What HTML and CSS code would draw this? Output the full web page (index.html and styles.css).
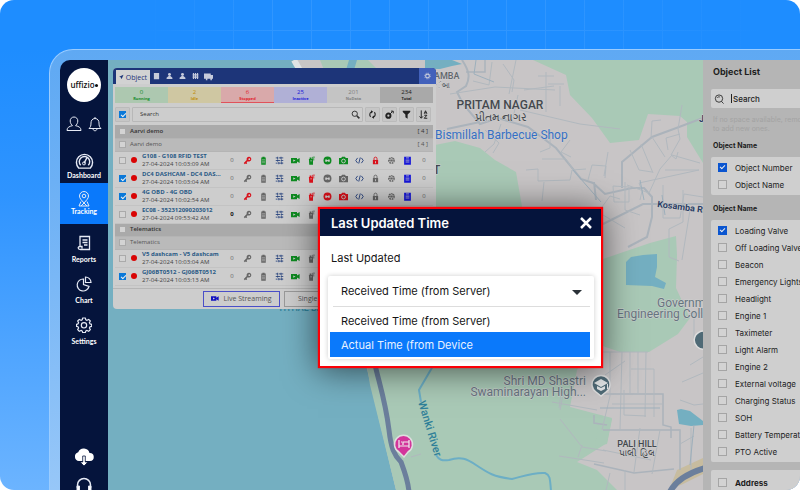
FILE: index.html
```html
<!DOCTYPE html>
<html lang="en">
<head>
<meta charset="utf-8">
<title>Tracking - Last Updated Time</title>
<link rel="stylesheet" href="styles.css">
</head>
<body>
<svg class="sprite" aria-hidden="true">
  <symbol id="key" viewBox="0 0 12 12"><path fill="currentColor" fill-rule="evenodd" d="M8 1a3.2 3.2 0 0 0-3 4.300L1 9.400 2.400 11l1-1 1 .8 1.200-1.300-.8-1 1.500-1.500A3.200 3.200 0 1 0 8 1zm.4 2a1.200 1.200 0 1 1 0 2.400 1.200 1.200 0 0 1 0-2.400z"/></symbol>
  <symbol id="battery" viewBox="0 0 12 12"><path fill="currentColor" d="M4.500 1h3v1H9v9.500H3V2h1.500z"/><path stroke="#cdcdcd" stroke-width=".7" d="M4 5h4M4 7h4M4 9h4"/></symbol>
  <symbol id="sliders" viewBox="0 0 12 12"><path stroke="#24407c" stroke-width="1.100" fill="none" d="M1 2.500h2.500M5 2.500h6M1 6h6M8.500 6H11M1 9.500h2.500M5 9.500h6M3.500 1v3M8 1v3M3.500 4.500v3M8.500 4.500v3M5 8v3M9 8v3"/></symbol>
  <symbol id="video" viewBox="0 0 12 12"><path fill="currentColor" d="M0 2.500h8v2.300l3.500-2v6.400L8 7.200v2.300H0z"/><path fill="#cdcdcd" d="m3 4.500 3 1.500-3 1.500z"/></symbol>
  <symbol id="fuel" viewBox="0 0 12 12"><path fill="currentColor" d="M2.500 4h1V2h2.500v2H8v7.500H3z"/><path fill="none" stroke="currentColor" d="M7.500 4V1.500h3M9 3v3"/><path fill="#cdcdcd" d="M4.500 6h2v1h-2z"/></symbol>
  <symbol id="disc" viewBox="0 0 12 12"><circle cx="6" cy="6" r="5.300" fill="currentColor"/><path fill="#cdcdcd" d="M3 4.500h2L6 5.500l1-1h2v3H7l-1-1-1 1H3z"/></symbol>
  <symbol id="camera" viewBox="0 0 12 12"><path fill="currentColor" d="M0 2.500h3l1-1.500h4l1 1.500h3V11H0z"/><circle cx="6" cy="6.700" r="2.500" fill="none" stroke="#cdcdcd" stroke-width="1.200"/></symbol>
  <symbol id="code" viewBox="0 0 12 12"><path stroke="#24407c" stroke-width="1.200" fill="none" d="M3.500 2.500 1 6l2.500 3.500M8.500 2.500 11 6 8.500 9.500M7 2 5 10"/></symbol>
  <symbol id="lock" viewBox="0 0 12 12"><path fill="none" stroke="currentColor" stroke-width="1.200" d="M4 6V3.500a2 2 0 0 1 4 0V6"/><path fill="currentColor" d="M2.500 5.300h7V11h-7z"/><path fill="#cdcdcd" d="M5.400 7h1.200v2.500H5.400z"/></symbol>
  <symbol id="wheel" viewBox="0 0 12 12"><circle cx="6" cy="6" r="3.700" fill="none" stroke="currentColor" stroke-width="1.600" stroke-dasharray="2.400 .8"/><path stroke="currentColor" d="M2 6h8M4 2.600l4 6.800M8 2.600 4 9.400"/></symbol>
  <symbol id="clip" viewBox="0 0 12 12"><path fill="currentColor" d="M1.500 1h9v10.500h-9z"/><path stroke="#cdcdcd" d="M4 2.500h4M3.500 5.500h5M3.500 8h5"/></symbol>
  <symbol id="person" viewBox="0 0 12 12"><circle cx="6" cy="3.500" r="2.500" fill="currentColor"/><path fill="currentColor" d="M4.500 6h3l3.500 3v2H1V9z"/></symbol>
  <symbol id="glass" viewBox="0 0 12 12"><circle cx="5" cy="5" r="3.500" fill="none" stroke="currentColor" stroke-width="1.300"/><path stroke="currentColor" stroke-width="2" d="m7.800 7.800 3.400 3.400"/></symbol>
  <symbol id="gear" viewBox="0 0 24 24"><path fill="none" stroke="currentColor" stroke-width="1.800" stroke-linejoin="round" d="M10 1.500h4l.7 2.700 1.800.8 2.500-1.400L21.500 6l-1.400 2.500.8 1.800 2.600.7v3l-2.600.7-.8 1.800 1.400 2.500-2.500 2.500-2.500-1.400-1.800.8-.7 2.600h-4l-.7-2.600-1.800-.8L5 21.500 2.500 19l1.400-2.500-.8-1.800L.8 14v-3l2.300-.7.8-1.800L2.500 6 5 3.600 7.500 5l1.800-.8z"/><circle cx="12" cy="12.500" r="4" fill="none" stroke="currentColor" stroke-width="1.800"/></symbol>
</svg>

<main class="stage">
<div class="device">
<div class="app">

<nav class="sidebar" aria-label="Main">
  <div class="logo">uffizio<i></i></div>
  <div class="quick">
    <button aria-label="Profile"><svg viewBox="0 0 16 16"><path d="M8 1a3.800 3.800 0 0 0-3.800 4C4.200 7 5.400 9 6.500 9.600 3 10.500 1 11.500 1 14.500h14c0-3-2-4-5.500-4.900C10.600 9 11.800 7 11.800 5A3.800 3.800 0 0 0 8 1z"/></svg></button>
    <button aria-label="Alerts"><svg viewBox="0 0 16 16"><path d="M8 1v1.500C5 2.500 4 5 4 7c0 3-.5 4-2 5.500h12C12.500 11 12 10 12 7c0-2-1-4.500-4-4.500M6 12.500c0 3 4 3 4 0"/></svg></button>
  </div>
  <a href="#dashboard"><svg class="big" viewBox="0 0 20 20"><path stroke-width="1.500" d="M4 17a8.500 8.500 0 1 1 12 0zM6 14a5.500 5.500 0 1 1 8 0M9.500 12l3-6"/><circle cx="9.500" cy="12" r="1.600"/></svg>Dashboard</a>
  <a href="#tracking" class="active"><svg viewBox="0 0 16 16"><path d="M8 12C5.500 9 3.500 7.500 3.500 5a4.500 4.500 0 0 1 9 0c0 2.500-2 4-4.500 7zM5 10.500 3 15h10l-2-4.500M5 15l3-3 3 3"/><circle cx="8" cy="5" r="1.800"/></svg>Tracking</a>
  <a href="#reports" class="gap"><svg viewBox="0 0 16 16"><path stroke-width="1.300" d="M4 11.500v-10h9.500V14.500h-9c-3 0-3-3-.5-3h2v2M6.500 5h5M6.500 7.500h5M8 10h3.500"/></svg>Reports</a>
  <a href="#chart"><svg viewBox="0 0 16 16"><path stroke-width="1.200" d="M7.500 3A6 6 0 1 0 13 10.500L7.500 8.500zM9.500 1v5.500H15A5.500 5.500 0 0 0 9.500 1z"/></svg>Chart</a>
  <a href="#settings"><svg viewBox="0 0 24 24"><use href="#gear"/></svg>Settings</a>
  <div class="tools">
    <button aria-label="Download"><svg viewBox="0 0 20 18"><path fill="#fff" stroke="none" d="M5 13a4.500 4.500 0 0 1-.8-8.800A6 6 0 0 1 15.500 5 4 4 0 0 1 16 13z"/><path fill="#fff" stroke="#05143c" stroke-width=".8" d="M8.700 8h2.600v6H14l-4 4-4-4h2.700z"/></svg></button>
    <button aria-label="Support"><svg viewBox="0 0 20 18"><path stroke-width="1.500" d="M3.500 12V9a6.500 6.500 0 0 1 13 0v3"/><path fill="#fff" d="M3 10h2.500v5H3zM14.500 10H17v5h-2.500z"/></svg></button>
  </div>
</nav>

<section class="map" aria-label="Map">
<svg class="terrain" viewBox="108 60 595 430" preserveAspectRatio="xMinYMin slice">
  <path fill="#c8c5c6" d="M108 60h595v430H108z"/>
  <path fill="#74afc1" d="M108 60h188l20 100 32 120 18 85 30 125H108z"/>
  <g fill="#a9c9b6">
    <path d="M320 60h48l20 20h-60zM533 60l33 15 4 20 22 23 18 25 29-3 9-26 32 2 7 6v15l16 26V60z"/>
    <path d="M420 150l15-5 20-4 25 7 15 12 21 12 7 40H420zM600 260l50-17 26-7 1 19-1 33 14 30-12 16-29 18h-29l-20-7zM366 360h217l-6 10-7 37 42 11-5 25-30 19 20 8 20 20H396l-26-105z"/>
    <path d="M600 415l12 4-5 25-12 2z"/>
  </g>
  <g fill="#74afc1">
    <path d="M425 60h27l10 4-10 2-12 3h-15zM349 60h8l-3 10h-8zM626 262l5-5 12-2 14-1v13l-2 10 11 6-2 6-12-3-26-1zM677 410l4-1 9 2 13 10v4l-12 1-12-2z"/>
  </g>
  <path fill="none" stroke="#dfe3e4" stroke-width="6" d="m294 60 8 14"/>
  <path fill="#c7bc9f" d="m677 470 26-12v16l-20 10-14 6z"/>
  <g fill="none" stroke="#abb3bb">
    <path stroke-width="2" d="M462 60c8 12 8 18 4 26l-9 6 6 12 17 20 18-6 30 9 28 21 25 31 12 4 12 11 27-6 12 0 8 9v20l-5 20-19 10M622 188v-26l30-25 27-10 24-9M447 129l33-7M603 224l40-20 60 0M594 182l2 18"/>
    <path stroke-width="1.500" d="M603 394h60v31l8 2 0 11M594 415v8l13 2M603 430l77 0v40M594 464l40 9 40-4M466 72h19V60"/>
  </g>
  <g fill="none" stroke="#b1b8be" stroke-width="1">
    <path d="M492 62l-3 23-16-4M503 64l11 16-2 12M516 60l-7 34M524 90l30-4M450 94l45-7 60 3M538 76h16M546 72v40M560 86v20M548 84h16M518 95l-5 23M520 110l60 14 40 5M485 130l14 13-6 10M501 124l-7 20-9 8M550 130l0 18-10 4M570 140l-9 12 10 5M542 159h24l8 12M526 170l12-1 0 12 32-1 2-10 14-1M544 182l-2 19M588 180l4-15 14 1-1 12M604 176l4-24M613 186l16 1v15h-15zM602 207l8-11 10 3"/>
    <path d="M652 137l13 20M630 150l9 20 13 2M641 144l12 29M682 105l-4 24 2 10-9 16 5 4 2-7M651 139l1-18 9-1M680 134l-14 4 2 12M700 163l-28-8-12 14-11 24-22-8M665 170h34M663 185v33h17l4-24 19 3M640 200l2-9-3-8 60-13M683 190v32l-14 7v28l10 4M625 182v28l15 5M603 215l22 13M690 210l-8 50M683 320l8-7 12 0M694 313v26M690 365l13-8"/>
    <path d="M610 352v44l-8 34M622 352l-2 78M630 352v42M638 352v42M646 352l-1 65M603 352h45M631 369h23v48M624 390v25l22 1M612 404h50M605 375l20-14M680 430v30M691 428v45M680 444l14-8M660 430l-8 44M640 428l-6 44M625 470v20M610 473l-4 17M603 450l48 10M680 400l14 5 9-1M682 382l21-9M560 419l22 28 24 4M559 456l45 7M582 445l-4 12M564 390l-4 20M547 388l14 6-2 14M552 402l45 8M411 457l10-3"/>
  </g>
  <path fill="none" stroke="#9dafbb" d="M665 215l-3-20M640 180l4 20M600 408l60 0M694 425l-4 40M476 60l-2 14 20 8M573 170l28 32"/>
  <path fill="none" stroke="#6b7f9c" stroke-width="5" d="M374 360c4 20 11 38 15 70 2 18 5 25 12 32 3 8 7 18 8 30"/>
  <path fill="none" stroke="#6b7f9c" stroke-width="6" d="M669 494c5-12 16-20 36-26"/>
  <path fill="none" stroke="#6caec5" stroke-width="2" d="m433 366-14 24 2 12M436 455c3 5 6 6 13 5 12-4 18-1 27 5 12 8 18 12 36 14 12-3 22-7 33-6 5 2 5 5 6 18"/>
  <g class="place">
    <text x="434" y="79" font-size="9">AMBA</text>
    <text x="436" y="88" font-size="8">ંબા</text>
    <text x="500" y="109" font-size="12" text-anchor="middle" class="dark">PRITAM NAGAR</text>
    <text x="501" y="121" font-size="11" text-anchor="middle" class="dark">પ્રીતમ નાગર</text>
    <text x="433" y="174" font-size="12" class="dark">T</text>
    <text x="637" y="447" font-size="9" text-anchor="middle" class="dark">PALI HILL</text>
    <text x="637" y="456" font-size="9" text-anchor="middle" class="dark">પાલી હિલ</text>
  </g>
  <text class="shop" x="435" y="139" font-size="12">Bismillah Barbecue Shop</text>
  <g class="site" font-size="12">
    <text x="657" y="307">Government</text>
    <text x="617" y="318">Engineering College</text>
    <text x="586" y="385" text-anchor="end">Shri MD Shastri</text>
    <text x="586" y="396" text-anchor="end">Swaminarayan High...</text>
  </g>
  <text class="road" font-size="9" transform="rotate(7 657 207)" x="657" y="207">Kosamba Rd</text>
  <text class="road" font-size="9" x="699" y="122">Jujwa</text>
  <text class="river" font-size="11" transform="rotate(73 418 402)" x="418" y="402">Wanki River</text>
  <text class="river" font-size="9" x="278" y="311">TITHAL BEACH</text>
  <g stroke="#dedede" stroke-width="1.500">
    <path fill="#d3359b" d="M404 457l-5-5a9 9 0 1 1 9 0z"/>
    <path fill="#4f6a76" d="M601 396l-5-4a9 9 0 1 1 10 0zM705 349a9 9 0 1 1 2-17z"/>
  </g>
  <path fill="none" stroke="#eee" stroke-width="1.200" d="M399 440v8M399 446h10v-4h-6v3M409 440v8M401 442h1"/>
  <path fill="#e4e7e8" d="m601 379 7 4-7 4-7-4zM597 386l4 2 4-2v3l-4 2-4-2zM607 384h1v5h-1z"/>
</svg>

<section class="objects" aria-label="Objects">
  <header class="tabs">
    <button class="tab on"><svg viewBox="0 0 12 12"><path fill="currentColor" d="M11.500.5.500 5.500 5 7l1.500 4.500z"/></svg>Object</button>
    <button class="tab" aria-label="Tasks"><svg><use href="#clip"/></svg></button>
    <button class="tab" aria-label="Driver"><svg><use href="#person"/></svg></button>
    <button class="tab" aria-label="Passenger"><svg><use href="#person"/></svg></button>
    <button class="tab" aria-label="Zones"><svg viewBox="0 0 12 12"><path stroke="currentColor" stroke-width="2" d="M2.500 1v10M6 1v10M9.500 1v10M1 4h10M1 8h10"/></svg></button>
    <button class="tab wide" aria-label="Vehicles"><svg viewBox="0 0 12 12"><path fill="currentColor" d="M0 2h9v2h3v5h-1.500v2H8.500V9h-4v2h-2V9H0z"/></svg></button>
    <button class="tab gear" aria-label="Panel settings"><svg viewBox="0 0 12 12"><circle cx="6" cy="6" r="3.200" fill="none" stroke="currentColor" stroke-width="2"/><circle cx="6" cy="6" r="5" fill="none" stroke="currentColor" stroke-width="1.200" stroke-dasharray="2 1.900"/></svg></button>
  </header>
  <div class="stats">
    <div class="run"><b>0</b>Running</div>
    <div class="idle"><b>2</b>Idle</div>
    <div class="stop"><b>6</b>Stopped</div>
    <div class="inact"><b>25</b>Inactive</div>
    <div class="nodata"><b>201</b>NoData</div>
    <div class="total"><b>234</b>Total</div>
  </div>
  <div class="bar">
    <label class="sq"><input type="checkbox" checked aria-label="Select all"></label>
    <div class="find"><input type="text" placeholder="Search" aria-label="Search objects"><svg><use href="#glass"/></svg></div>
    <button class="sq" aria-label="Refresh"><svg viewBox="0 0 12 12"><path fill="none" stroke="currentColor" stroke-width="1.500" d="M3.500 9A4.200 4.200 0 0 1 4.500 2.500M8.500 3a4.200 4.200 0 0 1-1 6.500"/><path fill="currentColor" d="M4 .3l3 2-3 2.500zM8 7.200v4.500L5 9.700z"/></svg></button>
    <button class="sq" aria-label="Add"><svg viewBox="0 0 12 12"><circle cx="4.500" cy="7.500" r="2.800" fill="none" stroke="currentColor" stroke-width="2.600"/><path stroke="currentColor" stroke-width="1.300" fill="none" d="M7 5l3-3M8 1.500h3v3"/></svg></button>
    <button class="sq" aria-label="Filter"><svg viewBox="0 0 12 12"><path fill="currentColor" d="M1 1h10v1.500L7.500 6v5.500l-3-2V6L1 2.500z"/></svg></button>
    <button class="sq" aria-label="Sort"><svg viewBox="0 0 12 12"><path stroke="currentColor" stroke-width="1.300" fill="none" d="M3 .5v10M.8 8.500 3 11l2.200-2.500M7 5l1.700-4L10.500 5M7.500 3.800h2.500M7 7h3.500L7 11h4"/></svg></button>
  </div>
  <table>
    <colgroup><col class="c-check"><col class="c-dot"><col><col class="c-i" span="13"><col class="c-end"></colgroup>
    <tbody>
      <tr class="group"><td><input type="checkbox" aria-label="Aarvi demo"></td><th colspan="12">Aarvi demo</th><td colspan="4" class="num">[ 4 ]</td></tr>
      <tr class="group sub"><td><input type="checkbox" aria-label="Aarvi demo branch"></td><th colspan="12">Aarvi demo</th><td colspan="4" class="num">[ 4 ]</td></tr>
      <tr><td><input type="checkbox" aria-label="G108"></td><td><i class="dot"></i></td><td class="name"><a href="#g108">G108 - G108 RFID TEST</a>27-04-2024 10:03:09 AM</td><td>0</td><td class="r"><svg><use href="#key"/></svg></td><td class="g"><svg><use href="#battery"/></svg></td><td><svg><use href="#sliders"/></svg></td><td class="g"><svg><use href="#video"/></svg></td><td class="g"><svg><use href="#fuel"/></svg></td><td class="g"><svg><use href="#disc"/></svg></td><td class="g"><svg><use href="#camera"/></svg></td><td><svg><use href="#code"/></svg></td><td class="r"><svg><use href="#lock"/></svg></td><td><svg><use href="#wheel"/></svg></td><td class="b"><svg><use href="#clip"/></svg></td><td>0</td><td></td></tr>
      <tr><td><input type="checkbox" checked aria-label="DC4"></td><td><i class="dot"></i></td><td class="name"><a href="#dc4">DC4 DASHCAM - DC4 DAS...</a>27-04-2024 10:03:04 AM</td><td>0</td><td><svg><use href="#key"/></svg></td><td><svg><use href="#battery"/></svg></td><td><svg><use href="#sliders"/></svg></td><td class="g"><svg><use href="#video"/></svg></td><td class="r"><svg><use href="#fuel"/></svg></td><td><svg><use href="#disc"/></svg></td><td><svg><use href="#camera"/></svg></td><td><svg><use href="#code"/></svg></td><td><svg><use href="#lock"/></svg></td><td><svg><use href="#wheel"/></svg></td><td class="b"><svg><use href="#clip"/></svg></td><td>0</td><td></td></tr>
      <tr><td><input type="checkbox" checked aria-label="4G OBD"></td><td><i class="dot"></i></td><td class="name"><a href="#obd">4G OBD - 4G OBD</a>27-04-2024 10:02:54 AM</td><td>0</td><td class="r"><svg><use href="#key"/></svg></td><td><svg><use href="#battery"/></svg></td><td><svg><use href="#sliders"/></svg></td><td class="g"><svg><use href="#video"/></svg></td><td class="r"><svg><use href="#fuel"/></svg></td><td class="r"><svg><use href="#disc"/></svg></td><td class="r"><svg><use href="#camera"/></svg></td><td><svg><use href="#code"/></svg></td><td><svg><use href="#lock"/></svg></td><td><svg><use href="#wheel"/></svg></td><td class="b"><svg><use href="#clip"/></svg></td><td>0</td><td></td></tr>
      <tr><td><input type="checkbox" aria-label="EC08"></td><td><i class="dot"></i></td><td class="name"><a href="#ec08">EC08 - 352312090203012</a>27-04-2024 09:53:42 AM</td><td class="k">0</td><td><svg><use href="#key"/></svg></td><td><svg><use href="#battery"/></svg></td><td><svg><use href="#sliders"/></svg></td><td class="g"><svg><use href="#video"/></svg></td><td><svg><use href="#fuel"/></svg></td><td></td><td></td><td></td><td></td><td></td><td></td><td></td><td></td></tr>
      <tr class="group"><td><input type="checkbox" aria-label="Telematics"></td><th colspan="16">Telematics</th></tr>
      <tr class="group sub"><td><input type="checkbox" aria-label="Telematics branch"></td><th colspan="16">Telematics</th></tr>
      <tr><td><input type="checkbox" aria-label="V5"></td><td><i class="dot"></i></td><td class="name"><a href="#v5">V5 dashcam - V5 dashcam</a>27-04-2024 10:03:04 AM</td><td>0</td><td><svg><use href="#key"/></svg></td><td><svg><use href="#battery"/></svg></td><td><svg><use href="#sliders"/></svg></td><td class="g"><svg><use href="#video"/></svg></td><td><svg><use href="#fuel"/></svg></td><td></td><td></td><td></td><td></td><td></td><td></td><td></td><td></td></tr>
      <tr><td><input type="checkbox" checked aria-label="GJ06"></td><td><i class="dot"></i></td><td class="name"><a href="#gj06">GJ06BT0512 - GJ06BT0512</a>27-04-2024 10:03:13 AM</td><td>0</td><td><svg><use href="#key"/></svg></td><td><svg><use href="#battery"/></svg></td><td><svg><use href="#sliders"/></svg></td><td class="g"><svg><use href="#video"/></svg></td><td><svg><use href="#fuel"/></svg></td><td></td><td></td><td></td><td></td><td></td><td></td><td></td><td></td></tr>
    </tbody>
  </table>
  <footer class="actions">
    <button class="live"><svg><use href="#video"/></svg>Live Streaming</button>
    <button class="single">Single</button>
  </footer>
</section>

<section class="dialog" role="dialog" aria-labelledby="dlg">
  <header><h1 id="dlg">Last Updated Time</h1><button aria-label="Close"><svg viewBox="0 0 12 12"><path stroke="#fff" stroke-width="2.500" d="m1 1 10 10M11 1 1 11"/></svg></button></header>
  <div class="body">
    <label for="upd">Last Updated</label>
    <div class="drop">
      <div class="pick"><select id="upd"><option>Received Time (from Server)</option><option>Actual Time (from Device</option></select></div>
      <ul>
        <li><button>Received Time (from Server)</button></li>
        <li><button class="hot">Actual Time (from Device</button></li>
      </ul>
    </div>
  </div>
</section>
</section>

<aside class="fields">
  <h2>Object List</h2>
  <div class="search"><svg viewBox="0 0 12 12"><circle cx="6" cy="5.500" r="4.400" fill="none" stroke="#222"/><path stroke="#222" fill="none" d="m9 9 2.500 2.500M4 4.500 5 3.500h2"/></svg><i></i><input type="text" placeholder="Search" aria-label="Search fields"></div>
  <p>If no space available, remove<br>to add new ones.</p>
  <h3>Object Name</h3>
  <div class="card">
    <label><input type="checkbox" checked>Object Number</label>
    <label><input type="checkbox">Object Name</label>
  </div>
  <h3>Object Name</h3>
  <div class="card">
    <label><input type="checkbox" checked>Loading Valve</label>
    <label><input type="checkbox">Off Loading Valve</label>
    <label><input type="checkbox">Beacon</label>
    <label><input type="checkbox">Emergency Lights</label>
    <label><input type="checkbox">Headlight</label>
    <label><input type="checkbox">Engine 1</label>
    <label><input type="checkbox">Taximeter</label>
    <label><input type="checkbox">Light Alarm</label>
    <label><input type="checkbox">Engine 2</label>
    <label><input type="checkbox">External voltage</label>
    <label><input type="checkbox">Charging Status</label>
    <label><input type="checkbox">SOH</label>
    <label><input type="checkbox">Battery Temperature</label>
    <label><input type="checkbox">PTO Active</label>
  </div>
  <div class="card last">
    <label><input type="checkbox">Address</label>
  </div>
</aside>

</div>
</div>
</main>
</body>
</html>
```
FILE: styles.css
```css
* { box-sizing: border-box; }
body { margin: 0; background: #fff; font-family: Inter, "Liberation Sans", sans-serif; }
button { font: inherit; color: inherit; background: none; border: 0; padding: 0; margin: 0; }
a { color: inherit; text-decoration: none; }
h1, h2, h3, p, ul { margin: 0; padding: 0; list-style: none; }
.sprite { display: none; }

.stage {
  height: 100vh;
  overflow: hidden;
  border-radius: 14px;
  padding: 49px 0 0 49px;
  background:
    linear-gradient(90deg, #1e8dff 18%, transparent 34%, transparent 70%, #1e8dff 95%) 0 0 / 100% 50px no-repeat,
    repeating-linear-gradient(90deg, transparent 0 38px, #3096ff 38px 39px) 0 0 / 39px 50px repeat-x,
    linear-gradient(#3096ff, #3096ff) 0 30px / 100% 1px no-repeat,
    linear-gradient(#1e8dff 10%, #2f94ff 40%, #6cb4ff 100%);
}
.device {
  height: 100%;
  padding: 10px 0 0 10px;
  border: 1px solid #9accff;
  border-width: 1px 0 0 1px;
  border-radius: 24px 0 0 0;
  background: linear-gradient(#5fa9f3, #6cb0f5 30%, #97c7f8);
}
.app {
  height: 100%;
  display: grid;
  grid-template-columns: 48px 1fr 97px;
  border-radius: 10px 0 0 0;
  overflow: hidden;
}

/* Sidebar */
.sidebar {
  display: flex;
  flex-direction: column;
  min-height: 0;
  background: #05143c;
  color: #fff;
  font: 700 7px/9px Lato, sans-serif;
  text-align: center;
}
.logo {
  position: relative;
  flex: none;
  width: 34px;
  height: 34px;
  margin: 8px auto 13px;
  padding-right: 3px;
  border-radius: 50%;
  background: #fff;
  color: #111;
  font: 600 8px/34px "Open Sans", sans-serif;
}
.logo i { position: absolute; right: 3px; top: 16px; width: 3px; height: 3px; border-radius: 50%; background: #111; }
.sidebar svg { width: 16px; height: 16px; fill: none; stroke: #e6eaf5; color: #e6eaf5; }
.sidebar svg.big { width: 19px; height: 19px; }
.quick { display: flex; justify-content: space-around; padding: 0 3px; height: 31px; flex: none; }
.quick button { height: 20px; }
.sidebar a { flex: none; height: 41px; padding-top: 6px; display: flex; flex-direction: column; align-items: center; gap: 4px; }
.sidebar a[href="#dashboard"] { height: 37px; gap: 0; }
.sidebar a.active { background: #0a79fb; padding-top: 8px; gap: 0; }
.sidebar a.gap { margin-top: 5px; }
.tools { margin-top: auto; display: flex; flex-direction: column; align-items: center; gap: 10px; height: 42px; flex: none; overflow: hidden; }
.tools svg { width: 20px; height: 18px; display: block; }

/* Map */
.map { position: relative; overflow: hidden; min-width: 0; }
.terrain { display: block; width: 100%; height: 100%; font-family: Roboto, sans-serif; }
.terrain text { paint-order: stroke; stroke: #cfcfcf; stroke-width: 1px; }
.place { fill: #62666c; font-weight: 500; }
.place .dark { fill: #44484d; }
.shop { fill: #356fc4; }
.site { fill: #66757f; }
.road { fill: #2c3f66; font-weight: 700; }
.terrain .river { fill: #2f8099; font-weight: 500; stroke: none; }

/* Object panel */
.objects {
  position: absolute;
  left: 5px;
  top: 8px;
  width: 323px;
  overflow: hidden;
  border-radius: 4px;
  background: #cdcdcd;
  color: #555;
  font: 6px/9px "Open Sans", sans-serif;
}
.objects svg { display: block; width: 9px; height: 9px; margin: auto; }
.tabs { display: flex; align-items: flex-end; height: 16px; padding-left: 3px; background: #1d3579; color: #c6cbdc; }
.tab { width: 13px; height: 16px; }
.tab svg { width: 7px; height: 8px; }
.tab.on { display: flex; align-items: center; width: 34px; height: 14px; padding: 0 3px; gap: 2px; background: #d2d2d2; color: #1d3579; font-size: 7px; }
.tab.on svg { width: 6px; height: 6px; }
.tab.wide svg { width: 9px; height: 9px; }
.tab.gear { width: 17px; margin-left: auto; background: #4261bb; }
.stats { display: grid; grid-template-columns: repeat(6, 1fr); margin: 3px 3px 4px 2px; text-align: center; font: 700 4px/5px "Open Sans", sans-serif; }
.stats div { height: 16px; padding-top: 1px; border-bottom: 1px solid transparent; }
.stats b { display: block; font: 400 6px/8px "Open Sans", sans-serif; }
.run { background: #adc8b0; color: #168a2b; }
.idle { background: #cfc7a2; color: #c08e0c; }
.stats .stop { background: #d9a9aa; color: #e0222c; border-color: #e0525a; }
.inact { background: #b0b0d6; color: #1a1ad8; }
.nodata { background: #c4c4c4; color: #808080; }
.total { background: #a9a9a9; color: #222; }
.bar { display: flex; gap: 2px; margin: 0 5px 3px 2px; }
.sq { display: flex; align-items: center; justify-content: center; width: 15px; height: 15px; background: #c6c6c6; border: 1px solid #bbb; border-radius: 1px; color: #222; }
.find { display: flex; flex: 1; align-items: center; padding-right: 2px; border: 1px solid #b8b8b8; border-radius: 1px; color: #333; }
.find input { flex: 1; min-width: 0; height: 13px; padding: 0 7px; border: 0; background: none; font: 6px/13px "Open Sans", sans-serif; }
.find svg { flex: none; margin: 0; }
input::placeholder { color: #333; opacity: 1; }
.objects input[type="checkbox"], .fields input[type="checkbox"] {
  appearance: none;
  position: relative;
  display: block;
  flex: none;
  width: 7px;
  height: 7px;
  margin: 0 auto;
  border: 1px solid #aaa;
  background: #d3d3d3;
}
.objects input[type="checkbox"]:checked { border-color: #0b78d8; background: #0b78d8; }
input[type="checkbox"]:checked::after {
  content: "";
  position: absolute;
  left: 1px;
  top: 1px;
  width: 4px;
  height: 2px;
  border: solid #eee;
  border-width: 0 0 1px 1px;
  transform: rotate(-45deg);
}
table { width: 318px; margin-left: 2px; table-layout: fixed; border-collapse: collapse; }
td, th { padding: 0; text-align: center; vertical-align: middle; }
.c-check { width: 15px; }
.c-dot { width: 8px; }
.c-i { width: 16px; }
.c-end { width: 1px; }
tr { height: 18px; border-bottom: 1px solid #c3c3c3; color: #666; }
tr.group { height: 13px; background: #aaa; border-color: #b4b4b4; color: #333; }
tr.sub { background: #bababa; color: #555; }
.group th { text-align: left; font-weight: 600; }
.sub th { font-weight: 400; }
td.num { text-align: right; padding-right: 5px; }
.dot { display: block; width: 6px; height: 6px; margin: auto; border-radius: 50%; background: #d90404; }
td.name { text-align: left; padding-left: 4px; line-height: 8px; white-space: nowrap; color: #444; overflow: hidden; }
.name a { display: block; font-weight: 700; color: #2a5a86; }
tr .r { color: #d8121c; }
tr .g { color: #0d8a20; }
tr .b { color: #1515d8; }
tr .k { color: #111; font-weight: 700; }
.actions { display: flex; gap: 4px; margin-top: 2px; padding: 2px 2px 2px 90px; border-top: 1px solid #b5b5b5; }
.actions button { width: 60px; height: 16px; border: 1px solid #999; font-size: 7px; }
.actions .live { display: flex; align-items: center; justify-content: center; gap: 4px; width: 77px; border-color: #4a4fc8; }
.actions .single { padding-left: 13px; text-align: left; }
.live svg { margin: 0; width: 8px; color: #1212c0; }

/* Dialog */
.dialog {
  position: absolute;
  left: 210px;
  top: 147px;
  width: 285px;
  border: 2px solid #fb0007;
  background: #fff;
  color: #151515;
  font-size: 11px;
  line-height: 16px;
  box-shadow: 0 0 1px #fb0007, 0 2px 32px rgba(0, 0, 0, .6);
}
.dialog header { display: flex; align-items: center; justify-content: space-between; height: 27px; padding: 0 9px 0 11px; background: #05143c; color: #fff; }
.dialog h1 { font-size: 13px; font-weight: 600; }
.dialog header svg { display: block; width: 12px; height: 12px; }
.body { padding: 14px 7px 7px 8px; }
.body > label { display: block; margin: 0 3px 10px; }
.drop { padding: 0 4px 2px 2px; border-radius: 2px; box-shadow: 0 0 5px rgba(0, 0, 0, .2); }
.pick { position: relative; margin: 0 0 3px 3px; border-bottom: 1px solid #ddd; }
.pick::after { content: ""; position: absolute; right: 8px; top: 14px; border: 5px solid transparent; border-top-color: #2b3238; border-bottom: 0; }
.pick select { appearance: none; display: block; width: 100%; height: 30px; padding: 0 8px; border: 0; background: none; font: inherit; color: inherit; }
.drop li button { display: block; width: 100%; height: 22px; padding: 0 11px; text-align: left; }
.drop li .hot { height: 25px; background: #0a79fb; color: #e8f1ff; }

/* Field list */
.fields { min-height: 0; overflow: hidden; padding-left: 8px; background: #b5b5b5; color: #1d1d1d; font-size: 8px; white-space: nowrap; }
.fields h2 { margin: 6px 2px 11px; font-size: 9px; line-height: 12px; font-weight: 700; }
.search { display: flex; align-items: center; height: 19px; padding-left: 3px; background: #cfcfcf; border-radius: 2px 0 0 2px; }
.search svg { width: 10px; height: 10px; }
.search i { width: 1px; height: 9px; margin-left: 7px; background: #222; }
.search input { width: 60px; padding: 0 1px; border: 0; background: none; font: 500 8px/12px Inter, sans-serif; }
.search input::placeholder { color: #222; }
.fields p { margin: 7px 2px; font-size: 7px; line-height: 9px; color: #a3a3a3; }
.fields h3 { margin: 0 2px; font-size: 7px; line-height: 9px; padding: 1px 0 7px; font-weight: 700; }
.card { margin-bottom: 8px; padding: 2px 0; background: #cfcfcf; border-radius: 2px 0 0 2px; }
.card label { display: flex; align-items: center; gap: 8px; height: 17px; padding-left: 7px; }
.fields .card input[type="checkbox"] { width: 9px; height: 9px; margin: 0; border-color: #a5a5a5; }
.fields .card input[type="checkbox"]:checked { background: #0a55d0; border-color: #0a55d0; }
.card.last { padding: 4px 0 12px; font-weight: 700; }
```
